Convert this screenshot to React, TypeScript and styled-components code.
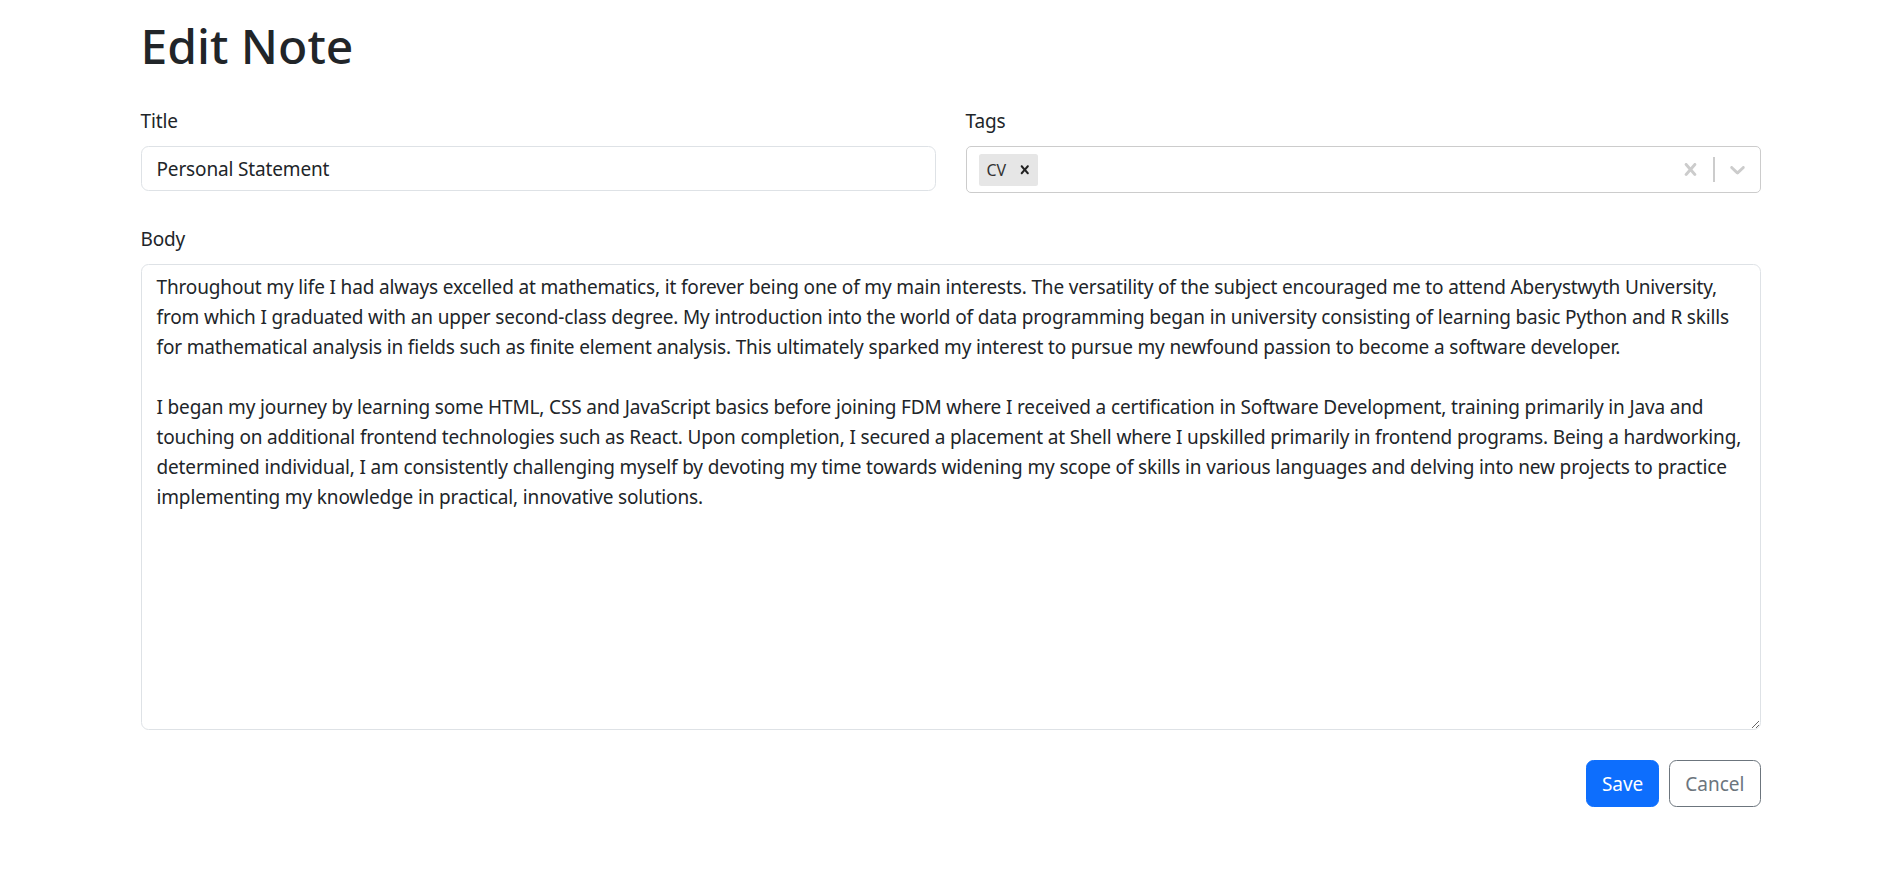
import React from "react";
import styled, { createGlobalStyle } from "styled-components";

const GlobalStyle = createGlobalStyle`
  *, *::before, *::after { box-sizing: border-box; }
  body {
    margin: 0;
    font-family: "Noto Sans", "Open Sans", sans-serif;
    font-size: 19px;
    line-height: 30px;
    letter-spacing: -0.15px;
    color: #212529;
    background: #fff;
  }
`;

const Container = styled.div`
  max-width: 1650px;
  margin: 0 auto;
  padding: 16px 16px 0 14px;
`;

const Heading = styled.h1`
  margin: 0 0 30px;
  font-size: 48px;
  font-weight: 500;
  line-height: 60px;
  letter-spacing: 0;
`;

const Form = styled.form`
  display: flex;
  flex-direction: column;
  gap: 31px;
`;

const Row = styled.div`
  display: grid;
  grid-template-columns: 1fr 1fr;
  column-gap: 30px;
`;

const Field = styled.div`
  display: flex;
  flex-direction: column;
`;

const Label = styled.label`
  display: block;
  margin-bottom: 10px;
  font-size: 19px;
  line-height: 30px;
`;

const TextInput = styled.input`
  height: 45px;
  padding: 0 15px;
  font-family: inherit;
  font-size: 19px;
  letter-spacing: -0.15px;
  color: #212529;
  border: 1px solid #dee2e6;
  border-radius: 7.5px;
  outline: none;
  background: #fff;
`;

const SelectControl = styled.div`
  display: flex;
  align-items: center;
  height: 47px;
  border: 1px solid #cccccc;
  border-radius: 5px;
  background: #fff;
`;

const ValueContainer = styled.div`
  flex: 1;
  display: flex;
  align-items: center;
  padding: 2.5px 10px;
`;

const Chip = styled.div`
  display: flex;
  align-items: stretch;
  height: 32px;
  margin: 2.5px;
  background: #e6e6e6;
  border-radius: 2.5px;
`;

const ChipLabel = styled.span`
  display: flex;
  align-items: center;
  padding: 0 5px 0 7.5px;
  font-size: 16px;
  color: #333333;
`;

const ChipRemove = styled.span`
  display: flex;
  align-items: center;
  padding: 0 5px;
  color: #222;
`;

const Indicators = styled.div`
  display: flex;
  align-items: center;
  align-self: stretch;
`;

const Indicator = styled.div`
  display: flex;
  padding: 10px;
  color: #cccccc;
`;

const Separator = styled.span`
  align-self: stretch;
  width: 1.25px;
  margin: 10px 0;
  background: #cccccc;
`;

const TextArea = styled.textarea`
  display: block;
  width: 100%;
  height: 466px;
  padding: 7px 15px;
  font-family: inherit;
  font-size: 19px;
  line-height: 30px;
  letter-spacing: -0.15px;
  white-space: pre;
  overflow: hidden;
  color: #212529;
  border: 1px solid #dee2e6;
  border-radius: 7.5px;
  outline: none;
  resize: vertical;
`;

const Actions = styled.div`
  display: flex;
  justify-content: flex-end;
  gap: 10px;
  margin-top: -1px;
`;

const Button = styled.button<{ $variant: "primary" | "outline" }>`
  height: 47px;
  padding: 0 15px;
  font-family: inherit;
  font-size: 19px;
  line-height: 30px;
  letter-spacing: 0;
  border-radius: 7.5px;
  border: 1.25px solid ${(p) => (p.$variant === "primary" ? "#0d6efd" : "#6c757d")};
  background: ${(p) => (p.$variant === "primary" ? "#0d6efd" : "#fff")};
  color: ${(p) => (p.$variant === "primary" ? "#fff" : "#6c757d")};
  cursor: pointer;
`;

const CrossIcon = ({ size }: { size: number }) => (
  <svg width={size} height={size} viewBox="0 0 20 20" fill="currentColor" aria-hidden="true">
    <path d="M14.348 14.849c-0.469 0.469-1.229 0.469-1.697 0l-2.651-3.030-2.651 3.029c-0.469 0.469-1.229 0.469-1.697 0-0.469-0.469-0.469-1.229 0-1.697l2.758-3.15-2.759-3.152c-0.469-0.469-0.469-1.228 0-1.697s1.228-0.469 1.697 0l2.652 3.031 2.651-3.031c0.469-0.469 1.228-0.469 1.697 0s0.469 1.229 0 1.697l-2.758 3.152 2.758 3.15c0.469 0.469 0.469 1.229 0 1.698z" />
  </svg>
);

const ChevronIcon = () => (
  <svg width={25} height={25} viewBox="0 0 20 20" fill="currentColor" aria-hidden="true">
    <path d="M4.516 7.548c0.436-0.446 1.043-0.481 1.576 0l3.908 3.747 3.908-3.747c0.533-0.481 1.141-0.446 1.574 0 0.436 0.445 0.408 1.197 0 1.615-0.406 0.418-4.695 4.502-4.695 4.502-0.217 0.223-0.502 0.335-0.787 0.335s-0.57-0.112-0.789-0.335c0 0-4.287-4.084-4.695-4.502s-0.436-1.17 0-1.615z" />
  </svg>
);

const body = [
  "Throughout my life I had always excelled at mathematics, it forever being one of my main interests. The versatility of the subject encouraged me to attend Aberystwyth University,",
  "from which I graduated with an upper second-class degree. My introduction into the world of data programming began in university consisting of learning basic Python and R skills",
  "for mathematical analysis in fields such as finite element analysis. This ultimately sparked my interest to pursue my newfound passion to become a software developer.",
  "",
  "I began my journey by learning some HTML, CSS and JavaScript basics before joining FDM where I received a certification in Software Development, training primarily in Java and",
  "touching on additional frontend technologies such as React. Upon completion, I secured a placement at Shell where I upskilled primarily in frontend programs. Being a hardworking,",
  "determined individual, I am consistently challenging myself by devoting my time towards widening my scope of skills in various languages and delving into new projects to practice",
  "implementing my knowledge in practical, innovative solutions.",
].join("\n");

export default function App() {
  return (
    <>
      <GlobalStyle />
      <Container>
        <Heading>Edit Note</Heading>
        <Form onSubmit={(e) => e.preventDefault()}>
          <Row>
            <Field>
              <Label htmlFor="title">Title</Label>
              <TextInput id="title" defaultValue="Personal Statement" />
            </Field>
            <Field>
              <Label>Tags</Label>
              <SelectControl>
                <ValueContainer>
                  <Chip>
                    <ChipLabel>CV</ChipLabel>
                    <ChipRemove>
                      <CrossIcon size={17.5} />
                    </ChipRemove>
                  </Chip>
                </ValueContainer>
                <Indicators>
                  <Indicator>
                    <CrossIcon size={25} />
                  </Indicator>
                  <Separator />
                  <Indicator>
                    <ChevronIcon />
                  </Indicator>
                </Indicators>
              </SelectControl>
            </Field>
          </Row>
          <Field>
            <Label htmlFor="body">Body</Label>
            <TextArea id="body" wrap="off" defaultValue={body} />
          </Field>
          <Actions>
            <Button type="submit" $variant="primary">Save</Button>
            <Button type="button" $variant="outline">Cancel</Button>
          </Actions>
        </Form>
      </Container>
    </>
  );
}
